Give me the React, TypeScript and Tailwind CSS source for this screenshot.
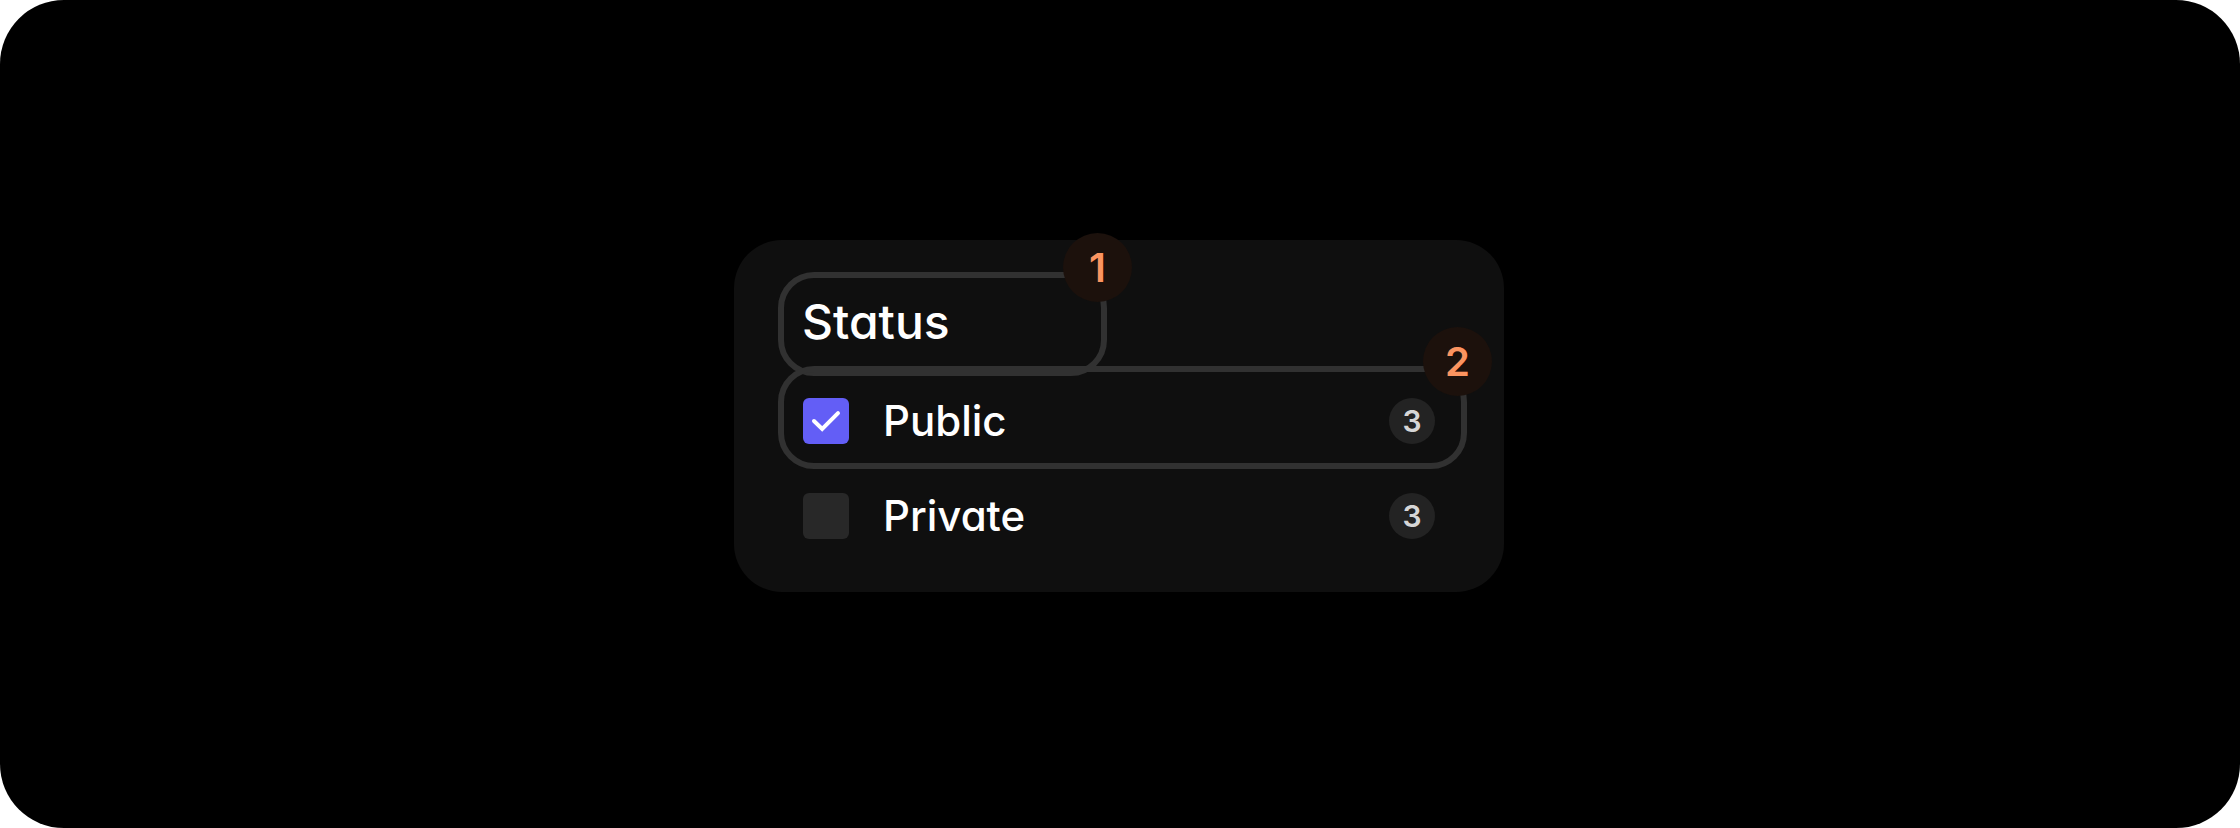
import { useState } from "react";

type Option = { id: string; label: string; count: number };

function Marker({ value }: { value: number }) {
  return (
    <span className="absolute -top-[45px] -right-[31px] flex size-[69px] items-center justify-center rounded-full bg-[#1c110c] text-[40px] leading-none font-semibold text-[#fb9460]">
      {value}
    </span>
  );
}

function OptionRow({
  option,
  checked,
  onChange,
}: {
  option: Option;
  checked: boolean;
  onChange: (checked: boolean) => void;
}) {
  return (
    <div className="flex h-[46px] items-center">
      <span className="relative size-[46px] shrink-0">
        <input
          id={option.id}
          type="checkbox"
          checked={checked}
          onChange={(event) => onChange(event.target.checked)}
          className="block size-full appearance-none rounded-md bg-[#282828] checked:bg-[#635ef6]"
        />
        {checked && (
          <svg
            viewBox="0 0 46 46"
            className="pointer-events-none absolute inset-0 size-full"
            fill="none"
            stroke="white"
            strokeWidth="4"
            strokeLinecap="round"
            aria-hidden="true"
          >
            <path d="M11 23L19.2 31L35 15.2" />
          </svg>
        )}
      </span>
      <label
        htmlFor={option.id}
        className="grow pl-[34px] text-[42px] leading-none font-medium text-white"
      >
        {option.label}
      </label>
      <span className="flex size-[46px] shrink-0 items-center justify-center rounded-full bg-[#232323] text-[30px] leading-none font-semibold text-[#d6d6d6]">
        {option.count}
      </span>
    </div>
  );
}

export default function App() {
  const [selected, setSelected] = useState({ public: true, private: false });

  return (
    <div className="bg-white">
      <main className="flex min-h-screen items-center justify-center rounded-[64px] bg-black pt-1 pr-0.5 font-['Inter','Liberation_Sans',sans-serif] [font-feature-settings:'cv11']">
        <section className="w-full max-w-[770px] rounded-[48px] bg-[#0f0f0f] pt-8 pr-[37px] pb-[53px] pl-11">
          <div className="relative flex h-[104px] w-[329px] items-center rounded-[36px] border-6 border-[#313131] pb-1 pl-[18px]">
            <h2 className="text-[48px] leading-none font-medium text-white">Status</h2>
            <Marker value={1} />
          </div>
          <div className="relative -mt-2.5 rounded-[36px] border-6 border-[#313131] pt-[26px] pr-[26px] pb-[19px] pl-[19px]">
            <OptionRow
              option={{ id: "public", label: "Public", count: 3 }}
              checked={selected.public}
              onChange={(value) => setSelected({ ...selected, public: value })}
            />
            <Marker value={2} />
          </div>
          <div className="mt-6 pr-8 pl-[25px]">
            <OptionRow
              option={{ id: "private", label: "Private", count: 3 }}
              checked={selected.private}
              onChange={(value) => setSelected({ ...selected, private: value })}
            />
          </div>
        </section>
      </main>
    </div>
  );
}
